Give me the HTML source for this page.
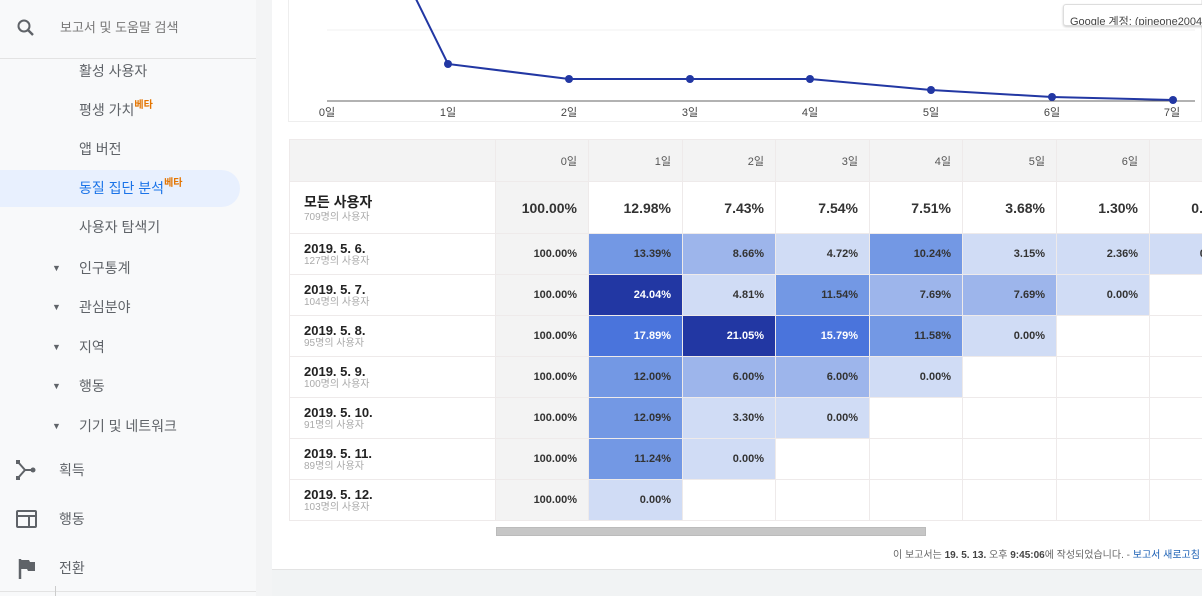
<!DOCTYPE html>
<html><head><meta charset="utf-8">
<style>
*{box-sizing:border-box;margin:0;padding:0}
body{width:1202px;height:596px;overflow:hidden;position:relative;background:#f1f3f4;font-family:"Liberation Sans","Noto Sans CJK KR",sans-serif;color:#333}
#side{position:absolute;left:0;top:0;width:256px;height:596px;background:#f8f9fa}
#gap{position:absolute;left:256px;top:0;width:16px;height:596px;background:#f3f4f5}
.si{position:absolute;font-size:14px;color:#5f6368;line-height:18px}
.tri{position:absolute;left:52px;font-size:9px;color:#5f6368}
.beta{color:#e37400;font-size:10px;font-weight:bold;position:relative;top:-7px;line-height:0}
#main{position:absolute;left:272px;top:0;width:930px;height:570px;background:#fff;border-bottom:1px solid #e3e3e3}
table{position:absolute;left:289px;top:139px;width:953px;border-collapse:collapse;table-layout:fixed;font-size:11px}
td{border:1px solid #eeeaea;text-align:right;padding-right:11px;font-weight:bold;color:#333;overflow:hidden;white-space:nowrap}
tr.h td{background:#f3f3f3;height:42px;font-weight:normal;color:#555;font-size:11px}
td.lab{text-align:left;padding-left:14px;background:#fff}
td.z{background:#f3f3f3}
.l1{background:#d0dcf5}.l2{background:#9db5eb}.l3{background:#7398e4}.l4{background:#4a74dc;color:#fff}.l5{background:#2237a3;color:#fff}
.d{font-size:13px;font-weight:bold;color:#222;line-height:14px}
.s{font-size:10px;color:#aaa;font-weight:normal;line-height:11px}
</style></head><body>
<div id="side">
  <svg style="position:absolute;left:16px;top:18px" width="20" height="20" viewBox="0 0 20 20"><circle cx="8" cy="8" r="5.5" fill="none" stroke="#5f6368" stroke-width="2"/><path d="M12 12l5 5" stroke="#5f6368" stroke-width="2.4"/></svg>
  <div class="si" style="left:60px;top:19px;font-size:13px;color:#777">보고서 및 도움말 검색</div>
  <div style="position:absolute;left:0;top:58px;width:256px;height:1px;background:#e3e3e3"></div>
  <div class="si" style="left:79px;top:62px">활성 사용자</div>
  <div class="si" style="left:79px;top:101px">평생 가치<span class="beta">베타</span></div>
  <div class="si" style="left:79px;top:140px">앱 버전</div>
  <div style="position:absolute;left:0;top:170px;width:240px;height:37px;background:#e8f0fe;border-radius:0 19px 19px 0"></div>
  <div class="si" style="left:79px;top:179px;color:#1a73e8">동질 집단 분석<span class="beta">베타</span></div>
  <div class="si" style="left:79px;top:218px">사용자 탐색기</div>
  <div class="tri" style="top:263px">▼</div><div class="si" style="left:79px;top:259px">인구통계</div>
  <div class="tri" style="top:302px">▼</div><div class="si" style="left:79px;top:298px">관심분야</div>
  <div class="tri" style="top:342px">▼</div><div class="si" style="left:79px;top:338px">지역</div>
  <div class="tri" style="top:381px">▼</div><div class="si" style="left:79px;top:377px">행동</div>
  <div class="tri" style="top:421px">▼</div><div class="si" style="left:79px;top:417px">기기 및 네트워크</div>
  <svg style="position:absolute;left:16px;top:460px" width="22" height="20" viewBox="0 0 22 20"><path d="M2 2l7 8-7 8" fill="none" stroke="#5f6368" stroke-width="2"/><path d="M9 10h9" stroke="#5f6368" stroke-width="2"/><rect x="0" y="0" width="4" height="4" fill="#5f6368"/><rect x="0" y="16" width="4" height="4" fill="#5f6368"/><circle cx="17" cy="10" r="2.5" fill="#5f6368"/></svg>
  <div class="si" style="left:59px;top:461px">획득</div>
  <svg style="position:absolute;left:16px;top:510px" width="22" height="18" viewBox="0 0 22 18"><rect x="1" y="1" width="19" height="16" rx="1" fill="none" stroke="#5f6368" stroke-width="2"/><path d="M1 6h19M13 6v11" stroke="#5f6368" stroke-width="2"/></svg>
  <div class="si" style="left:59px;top:510px">행동</div>
  <svg style="position:absolute;left:18px;top:559px" width="18" height="20" viewBox="0 0 18 20"><path d="M2 0v20" stroke="#5f6368" stroke-width="2.5"/><path d="M3 1h8l1 2h5v9h-7l-1-2H3z" fill="#5f6368"/></svg>
  <div class="si" style="left:59px;top:559px">전환</div>
  <div style="position:absolute;left:0;top:591px;width:256px;height:1px;background:#e3e3e3"></div>
  <div style="position:absolute;left:55px;top:586px;width:1px;height:10px;background:#ccc"></div>
</div>
<div id="gap"></div>
<div id="main"></div>
<div style="position:absolute;left:288px;top:0;width:914px;height:122px;border:1px solid #eee;border-top:none;background:#fff"></div>
<div style="position:absolute;left:1063px;top:4px;width:150px;height:22px;background:#fff;border:1px solid #ddd;border-radius:3px;box-shadow:0 1px 2px rgba(0,0,0,.2);font-size:11px;color:#444;padding:8px 0 0 6px;white-space:nowrap;overflow:hidden">Google 계정: (pineone2004</div>
<svg style="position:absolute;left:0;top:0" width="1202" height="125">
  <path d="M327 30H1195" stroke="#f2f2f2"/>
  <path d="M327 101H1195" stroke="#666" stroke-width="1"/>
  <polyline points="415,-3 448,64 569,79 690,79 810,79 931,90 1052,97 1173,100" fill="none" stroke="#2237a3" stroke-width="2"/>
  <g fill="#2237a3"><circle cx="448" cy="64" r="4"/><circle cx="569" cy="79" r="4"/><circle cx="690" cy="79" r="4"/><circle cx="810" cy="79" r="4"/><circle cx="931" cy="90" r="4"/><circle cx="1052" cy="97" r="4"/><circle cx="1173" cy="100" r="4"/></g>
  <g font-size="11" fill="#444" text-anchor="middle" font-family="Liberation Sans, Noto Sans CJK KR, sans-serif"><text x="327" y="116">0일</text><text x="448" y="116">1일</text><text x="569" y="116">2일</text><text x="690" y="116">3일</text><text x="810" y="116">4일</text><text x="931" y="116">5일</text><text x="1052" y="116">6일</text><text x="1172" y="116">7일</text></g>
</svg>
<table>
<colgroup><col style="width:206px"><col style="width:93px"><col style="width:94px"><col style="width:93px"><col style="width:94px"><col style="width:93px"><col style="width:94px"><col style="width:93px"><col style="width:93px"></colgroup>
<tr class="h"><td class="lab" style="background:#f3f3f3"></td><td>0일</td><td>1일</td><td>2일</td><td>3일</td><td>4일</td><td>5일</td><td>6일</td><td>7일</td></tr>
<tr style="height:52px;font-size:14px"><td class="lab"><div style="font-size:14px;font-weight:bold;color:#222">모든 사용자</div><div class="s">709명의 사용자</div></td><td class="z">100.00%</td><td>12.98%</td><td>7.43%</td><td>7.54%</td><td>7.51%</td><td>3.68%</td><td>1.30%</td><td>0.27%</td></tr>
<tr style="height:41px"><td class="lab"><div class="d">2019. 5. 6.</div><div class="s">127명의 사용자</div></td><td class="z">100.00%</td><td class="l3">13.39%</td><td class="l2">8.66%</td><td class="l1">4.72%</td><td class="l3">10.24%</td><td class="l1">3.15%</td><td class="l1">2.36%</td><td class="l1">0.79%</td></tr>
<tr style="height:41px"><td class="lab"><div class="d">2019. 5. 7.</div><div class="s">104명의 사용자</div></td><td class="z">100.00%</td><td class="l5">24.04%</td><td class="l1">4.81%</td><td class="l3">11.54%</td><td class="l2">7.69%</td><td class="l2">7.69%</td><td class="l1">0.00%</td><td></td></tr>
<tr style="height:41px"><td class="lab"><div class="d">2019. 5. 8.</div><div class="s">95명의 사용자</div></td><td class="z">100.00%</td><td class="l4">17.89%</td><td class="l5">21.05%</td><td class="l4">15.79%</td><td class="l3">11.58%</td><td class="l1">0.00%</td><td></td><td></td></tr>
<tr style="height:41px"><td class="lab"><div class="d">2019. 5. 9.</div><div class="s">100명의 사용자</div></td><td class="z">100.00%</td><td class="l3">12.00%</td><td class="l2">6.00%</td><td class="l2">6.00%</td><td class="l1">0.00%</td><td></td><td></td><td></td></tr>
<tr style="height:41px"><td class="lab"><div class="d">2019. 5. 10.</div><div class="s">91명의 사용자</div></td><td class="z">100.00%</td><td class="l3">12.09%</td><td class="l1">3.30%</td><td class="l1">0.00%</td><td></td><td></td><td></td><td></td></tr>
<tr style="height:41px"><td class="lab"><div class="d">2019. 5. 11.</div><div class="s">89명의 사용자</div></td><td class="z">100.00%</td><td class="l3">11.24%</td><td class="l1">0.00%</td><td></td><td></td><td></td><td></td><td></td></tr>
<tr style="height:41px"><td class="lab"><div class="d">2019. 5. 12.</div><div class="s">103명의 사용자</div></td><td class="z">100.00%</td><td class="l1">0.00%</td><td></td><td></td><td></td><td></td><td></td><td></td></tr>
</table>
<div style="position:absolute;left:496px;top:527px;width:430px;height:9px;background:#c6c6c6;border:1px solid #bbb"></div>
<div style="position:absolute;left:893px;top:546px;font-size:10px;color:#666;white-space:nowrap">이 보고서는 <b style="color:#444">19. 5. 13.</b> 오후 <b style="color:#444">9:45:06</b>에 작성되었습니다. - <span style="color:#1a5fb4">보고서 새로고침</span></div>
</body></html>
